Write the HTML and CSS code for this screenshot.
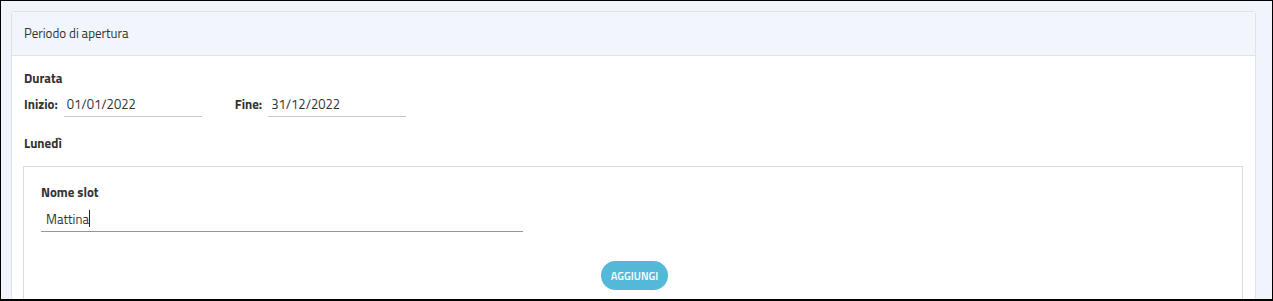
FILE: index.html
```html
<!DOCTYPE html>
<html lang="it">
<head>
    <meta charset="UTF-8">
    <meta name="viewport" content="width=device-width, initial-scale=1.0">
    <title>Periodo di apertura</title>
    <link rel="stylesheet" href="styles.css">
</head>
<body>
    <div class="card">
        <div class="card-header">Periodo di apertura</div>

        <div class="card-body">
            <div class="section-title">Durata</div>
            <div class="date-row">
                <label class="field-label">Inizio:</label>
                <input class="text-field" type="text" value="01/01/2022">
                <label class="field-label fine">Fine:</label>
                <input class="text-field" type="text" value="31/12/2022">
            </div>

            <div class="section-title day">Lunedì</div>

            <div class="slot-box">
                <div class="slot-label">Nome slot</div>
                <div class="text-field slot-field focused">Mattina<span class="caret"></span></div>
                <div class="actions">
                    <button class="btn-add">AGGIUNGI</button>
                </div>
            </div>
        </div>
    </div>
</body>
</html>
```

FILE: styles.css
```css
html, body {
    height: 100%;
}
body {
    margin: 0;
    box-sizing: border-box;
    font-family: "Titillium Web", Lato, "Noto Sans", sans-serif;
    font-size: 13px;
    color: #333;
    background-color: #f1f5fb;
    border: 1px solid #000;
    border-bottom-width: 2px;
    overflow: hidden;
}
.card {
    margin: 10px 16px 0 10px;
    background-color: #fff;
    border: 1px solid #dfe3e8;
    border-radius: 3px;
}
.card-header {
    background-color: #f2f6fc;
    border-bottom: 1px solid #dfe3e8;
    padding: 0 12px;
    height: 43px;
    line-height: 43px;
    color: #333;
}
.card-body {
    padding: 12px 12px 0;
}
.section-title {
    font-weight: bold;
    line-height: 20px;
}
.section-title.day {
    margin-top: 16px;
}
.date-row {
    display: flex;
    align-items: center;
    margin-top: 3px;
}
.field-label {
    font-weight: bold;
    margin-right: 6px;
}
.field-label.fine {
    margin-left: 33px;
}
.text-field {
    box-sizing: border-box;
    width: 138px;
    height: 26px;
    padding: 0 3px;
    border: none;
    border-bottom: 1px solid #c9c9c9;
    font-family: inherit;
    font-size: 13px;
    color: #333;
    background: transparent;
    outline: none;
}
.slot-box {
    margin: 13px 0 0 -1px;
    border: 1px solid #dcdcdc;
    padding: 15px 17px 20px;
}
.slot-label {
    font-weight: bold;
    line-height: 20px;
}
.slot-field {
    width: 482px;
    margin-top: 4px;
    padding-left: 5px;
    display: flex;
    align-items: center;
}
.slot-field.focused {
    border-bottom-color: #64a6c3;
}
.caret {
    display: inline-block;
    width: 1px;
    height: 17px;
    background-color: #222;
}
.actions {
    display: flex;
    justify-content: center;
    margin-top: 29px;
    padding-left: 3px;
}
.btn-add {
    height: 29px;
    padding: 0 10px;
    border: none;
    border-radius: 15px;
    background-color: #54b9d9;
    color: #fff;
    font-family: inherit;
    font-size: 11px;
    font-weight: 600;
}
```
